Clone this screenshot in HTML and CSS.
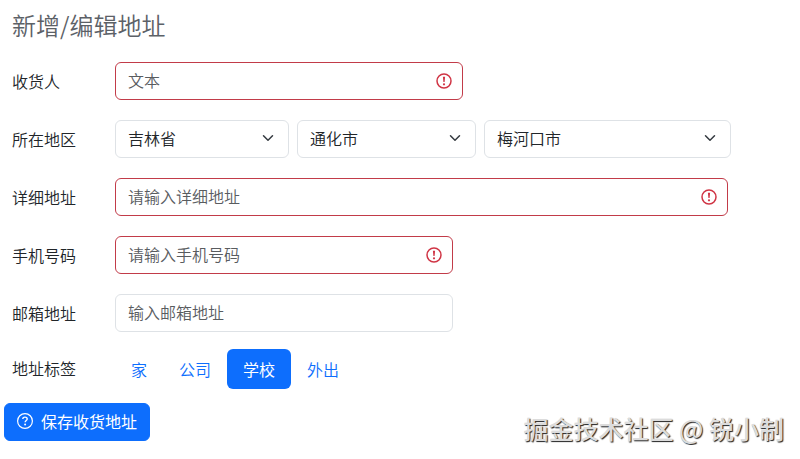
FILE: index.html
```html
<!DOCTYPE html>
<html lang="zh-CN">
<head>
    <meta charset="UTF-8">
    <meta name="viewport" content="width=device-width, initial-scale=1.0">
    <title>新增/编辑地址</title>
    <link rel="stylesheet" href="styles.css">
</head>
<body>
    <svg class="sprite" aria-hidden="true">
        <symbol id="icon-error" viewBox="0 0 16 16">
            <circle cx="8" cy="8" r="7" fill="none" stroke="currentColor" stroke-width="1.5"/>
            <path d="M6.9 3.8h2.2l-.5 5.2H7.4z" fill="currentColor"/>
            <circle cx="8" cy="11.3" r="1.1" fill="currentColor"/>
        </symbol>
        <symbol id="icon-chevron" viewBox="0 0 16 16">
            <path d="M2 5l6 6 6-6" fill="none" stroke="currentColor" stroke-width="2" stroke-linecap="round" stroke-linejoin="round"/>
        </symbol>
    </svg>

    <form class="address-form" id="addressForm">
        <h1 class="title">新增/编辑地址</h1>

        <div class="row">
            <label class="label" for="receiver">收货人</label>
            <div class="field field-name">
                <input class="control invalid" type="text" id="receiver" placeholder="文本">
                <svg class="error-icon"><use href="#icon-error"/></svg>
            </div>
        </div>

        <div class="row">
            <label class="label" for="province">所在地区</label>
            <div class="regions">
                <div class="field field-province">
                    <select class="control" id="province">
                        <option>吉林省</option>
                    </select>
                    <svg class="chevron"><use href="#icon-chevron"/></svg>
                </div>
                <div class="field field-city">
                    <select class="control" id="city" aria-label="城市">
                        <option>通化市</option>
                    </select>
                    <svg class="chevron"><use href="#icon-chevron"/></svg>
                </div>
                <div class="field field-district">
                    <select class="control" id="district" aria-label="区县">
                        <option>梅河口市</option>
                    </select>
                    <svg class="chevron"><use href="#icon-chevron"/></svg>
                </div>
            </div>
        </div>

        <div class="row">
            <label class="label" for="detail">详细地址</label>
            <div class="field field-detail">
                <input class="control invalid" type="text" id="detail" placeholder="请输入详细地址">
                <svg class="error-icon"><use href="#icon-error"/></svg>
            </div>
        </div>

        <div class="row">
            <label class="label" for="phone">手机号码</label>
            <div class="field field-contact">
                <input class="control invalid" type="tel" id="phone" placeholder="请输入手机号码">
                <svg class="error-icon"><use href="#icon-error"/></svg>
            </div>
        </div>

        <div class="row">
            <label class="label" for="email">邮箱地址</label>
            <div class="field field-contact">
                <input class="control" type="email" id="email" placeholder="输入邮箱地址">
            </div>
        </div>

        <div class="row row-tags">
            <span class="label" id="tagLabel">地址标签</span>
            <nav class="tags" aria-labelledby="tagLabel">
                <a class="tag" href="#">家</a>
                <a class="tag" href="#">公司</a>
                <a class="tag active" href="#">学校</a>
                <a class="tag" href="#">外出</a>
            </nav>
        </div>
    </form>

    <footer class="footer">
        <button class="save" type="submit" form="addressForm">
            <svg class="save-icon" viewBox="0 0 16 16" aria-hidden="true">
                <circle cx="8" cy="8" r="7.4" fill="none" stroke="currentColor" stroke-width="1.2"/>
                <path d="M5.8 6.1c0-1.2.9-2 2.2-2s2.2.8 2.2 1.9c0 1.5-2.1 1.6-2.1 3.3" fill="none" stroke="currentColor" stroke-width="1.4"/>
                <circle cx="8.1" cy="11.4" r="1" fill="currentColor"/>
            </svg>
            保存收货地址
        </button>
        <span class="watermark">掘金技术社区 @ 锐小制</span>
    </footer>
</body>
</html>
```

FILE: styles.css
```css
* {
    box-sizing: border-box;
}

body {
    margin: 0;
    font-family: "Noto Sans CJK SC", sans-serif;
    font-size: 16px;
    font-weight: 350;
    line-height: 24px;
    color: #212529;
    background: #fff;
}

.sprite {
    display: none;
}

.address-form {
    padding: 7px 12px 0;
}

.title {
    margin: 0 0 19px;
    font-size: 24px;
    font-weight: 350;
    line-height: 36px;
    color: #5c6167;
}

.row {
    display: flex;
    margin-bottom: 20px;
}

.label {
    flex: 0 0 103px;
    padding-top: 7px;
}

.field {
    position: relative;
}

.field-name {
    width: 348px;
}

.field-detail {
    width: 613px;
}

.field-contact {
    width: 338px;
}

.regions {
    display: flex;
    gap: 8px;
}

.field-province {
    width: 174px;
}

.field-city {
    width: 179px;
}

.field-district {
    width: 247px;
}

.control {
    display: block;
    width: 100%;
    height: 38px;
    padding: 5px 12px 7px;
    font: inherit;
    color: inherit;
    background: #fff;
    border: 1px solid #dee2e6;
    border-radius: 6px;
    appearance: none;
}

.control::placeholder {
    color: #595c5f;
    opacity: 1;
}

.invalid {
    border-color: #c23b49;
}

.error-icon {
    position: absolute;
    top: 11px;
    right: 11px;
    width: 16px;
    height: 16px;
    color: #d03545;
}

.chevron {
    position: absolute;
    top: 12px;
    right: 15px;
    width: 12px;
    height: 12px;
    color: #343a40;
    pointer-events: none;
}

.row-tags {
    margin: -3px 0 14px;
}

.tags {
    display: flex;
}

.tag {
    padding: 8px 16px;
    color: #0d6efd;
    text-decoration: none;
    border-radius: 6px;
}

.tag.active {
    color: #fff;
    font-weight: 400;
    background: #0d6efd;
}

.footer {
    display: flex;
    justify-content: space-between;
    align-items: flex-start;
    padding: 0 16px 0 4px;
}

.save {
    display: flex;
    align-items: center;
    gap: 8px;
    height: 38px;
    padding: 5px 12px 7px;
    font: inherit;
    font-weight: 400;
    color: #fff;
    background: #0d6efd;
    border: 1px solid #0d6efd;
    border-radius: 6px;
    cursor: pointer;
}

.save-icon {
    width: 16px;
    height: 16px;
}

.watermark {
    padding-top: 8px;
    font-size: 25px;
    font-weight: 500;
    line-height: 34px;
    color: #dcdcdc;
    text-shadow: 1px 1px 1px #222;
}
```
